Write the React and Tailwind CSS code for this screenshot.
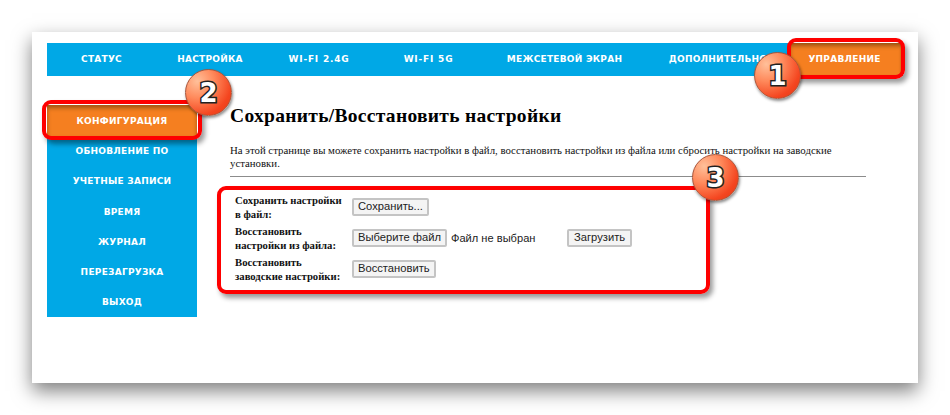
const tabs = [
  ["СТАТУС", "w-[109px] tracking-[0.25px]"],
  ["НАСТРОЙКА", "w-[108px] tracking-[0.25px]"],
  ["WI-FI 2.4G", "w-[110px] tracking-[0.8px]"],
  ["WI-FI 5G", "w-[109px] tracking-[0.8px]"],
  ["МЕЖСЕТЕВОЙ ЭКРАН", "w-[163px] tracking-[0.25px]"],
  ["ДОПОЛНИТЕЛЬНО", "w-[144px] tracking-[0.25px]"],
];
const side = ["ОБНОВЛЕНИЕ ПО", "УЧЕТНЫЕ ЗАПИСИ", "ВРЕМЯ", "ЖУРНАЛ", "ПЕРЕЗАГРУЗКА", "ВЫХОД"];
const navFont = "font-['DejaVu_Sans',sans-serif] font-bold text-[9px] text-white";
const serif = "font-['Liberation_Serif',serif]";
const btn = "h-[18px] border-2 border-[#c4c4c4] bg-[#f4f4f4] rounded-[2px] font-['Liberation_Sans',sans-serif] text-[11.2px] leading-[13px] text-[#222] whitespace-nowrap";

function Frame({ className }) {
  return <div className={"absolute border-[4px] border-[#fe0000] rounded-[9px] shadow-[3px_4px_5px_rgba(0,0,0,0.4)] " + className} />;
}
function Badge({ n, className }) {
  return (
    <div className={"absolute w-[47px] h-[47px] rounded-full flex items-center justify-center border border-[#a8553a] shadow-[1px_2px_3px_rgba(0,0,0,0.45)] bg-[radial-gradient(circle_at_25%_25%,#ffc09a_0%,#ff8a5c_35%,#f4451f_72%,#e03a15_100%)] " + className}>
      <span className="font-['DejaVu_Sans',sans-serif] font-bold text-[26px] leading-none text-white [-webkit-text-stroke:3px_#222] [paint-order:stroke_fill]">{n}</span>
    </div>
  );
}

export default function App() {
  return (
    <div className="w-[950px] h-[415px] overflow-hidden bg-white pt-[32px] pl-[32px]">
      <div className="relative w-[886px] h-[351px] bg-white px-[15px] pt-[11px] shadow-[0_8px_18px_rgba(0,0,0,0.5)]">
        <nav className="flex h-[33px] w-[856px] bg-[#00a8e6]">
          {tabs.map(([t, w]) => (
            <div key={t} className={"flex items-center justify-center whitespace-nowrap pt-[1px] " + navFont + " " + w}>{t}</div>
          ))}
          <div className={"flex flex-1 items-center justify-center pt-[1px] pr-[4px] tracking-[0.25px] bg-[#f57f20] shadow-[inset_0_3px_4px_rgba(90,50,10,0.55),inset_-2px_0_2px_rgba(90,50,10,0.3)] " + navFont}>УПРАВЛЕНИЕ</div>
        </nav>

        <div className="flex mt-[29px]">
          <aside className="w-[150px] h-[212px] bg-[#00a8e6] flex flex-col shrink-0">
            <div className={"h-[31px] flex items-center justify-center pt-[2px] tracking-[0.25px] bg-[#f57f20] shadow-[inset_0_3px_4px_rgba(90,50,10,0.55)] " + navFont}>КОНФИГУРАЦИЯ</div>
            {side.map((s) => (
              <div key={s} className={"h-[30.2px] flex items-center justify-center pt-[2px] tracking-[0.25px] " + navFont}>{s}</div>
            ))}
          </aside>

          <main className={"ml-[33px] w-[636px] text-[#111] " + serif}>
            <h1 className="mt-[-1px] text-[19.5px] leading-[24px] font-bold tracking-[0.3px] text-black">Сохранить/Восстановить настройки</h1>
            <p className="mt-[16px] text-[10.8px] leading-[13px] w-[620px]">На этой странице вы можете сохранить настройки в файл, восстановить настройки из файла или сбросить настройки на заводские установки.</p>
            <hr className="mt-[6px] border-0 h-px bg-[#8c8c8c]" />
            <div className="mt-[14px] ml-[5px] grid grid-cols-[117px_1fr] auto-rows-[31px] items-center text-[10.7px] leading-[14px] font-bold">
              <div>Сохранить настройки<br />в файл:</div>
              <div className="font-normal"><button className={btn + " px-[4px]"}>Сохранить...</button></div>
              <div>Восстановить<br />настройки из файла:</div>
              <div className="flex items-center font-normal font-['Liberation_Sans',sans-serif] text-[11.1px] text-[#222]">
                <button className={btn + " px-[4px]"}>Выберите файл</button>
                <span className="ml-[4px] w-[116px]">Файл не выбран</span>
                <button className={btn + " px-[5px]"}>Загрузить</button>
              </div>
              <div>Восстановить<br />заводские настройки:</div>
              <div className="font-normal"><button className={btn + " px-[4px]"}>Восстановить</button></div>
            </div>
          </main>
        </div>

        <Frame className="left-[755px] top-[6px] w-[118px] h-[41px]" />
        <Frame className="left-[10px] top-[68px] w-[160px] h-[40px]" />
        <Frame className="left-[185px] top-[154px] w-[493px] h-[108px]" />
        <Badge n="1" className="left-[722px] top-[20px]" />
        <Badge n="2" className="left-[153px] top-[37px]" />
        <Badge n="3" className="left-[660px] top-[122px]" />
      </div>
    </div>
  );
}
